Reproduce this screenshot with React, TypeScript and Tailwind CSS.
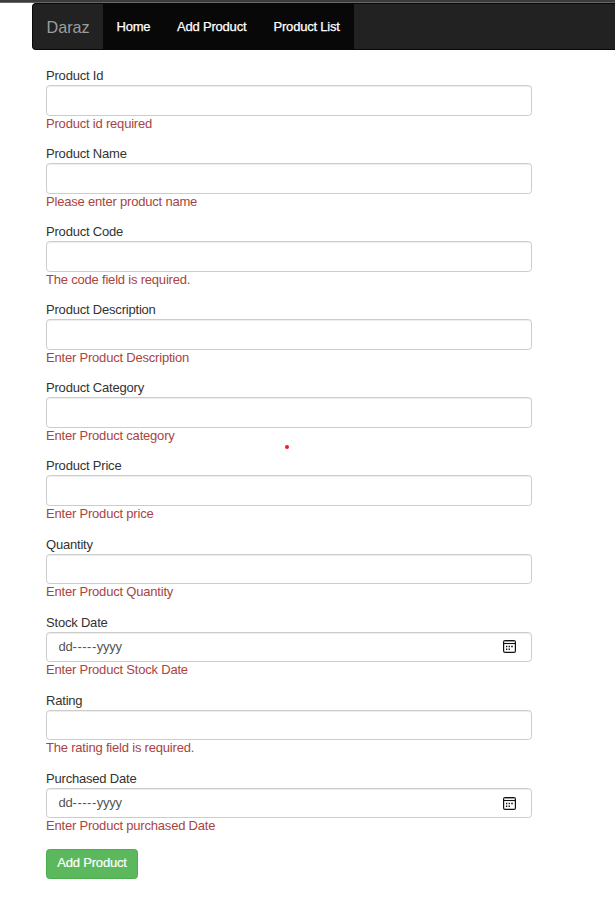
type FieldProps = { label: string; error: string; date?: boolean };

const fields: FieldProps[] = [
  { label: 'Product Id', error: 'Product id required' },
  { label: 'Product Name', error: 'Please enter product name' },
  { label: 'Product Code', error: 'The code field is required.' },
  { label: 'Product Description', error: 'Enter Product Description' },
  { label: 'Product Category', error: 'Enter Product category' },
  { label: 'Product Price', error: 'Enter Product price' },
  { label: 'Quantity', error: 'Enter Product Quantity' },
  { label: 'Stock Date', error: 'Enter Product Stock Date', date: true },
  { label: 'Rating', error: 'The rating field is required.' },
  { label: 'Purchased Date', error: 'Enter Product purchased Date', date: true },
];

function CalendarIcon() {
  return (
    <svg width="13" height="13" viewBox="0 0 13 13" fill="none" stroke="#111">
      <rect x=".6" y=".6" width="11.8" height="11.8" rx="1.5" strokeWidth="1.2" />
      <path d="M1 1.5h11" stroke="#999" strokeWidth=".8" />
      <path d="M1 3.5h11" strokeWidth="1.1" />
      <path d="M3 6.5h1.3M5.6 6.5h1.3M8.2 6.5h1.6M3 9.3h1.3M5.6 9.3h1.3" strokeWidth="1.5" />
    </svg>
  );
}

function Field({ label, error, date }: FieldProps) {
  return (
    <div className="h-[78.1px]">
      <label className="block h-[18px] text-[#333]">{label}</label>
      <div className="flex h-[30.6px] w-[486px] items-center justify-between rounded-[3.6px] border border-[#ccc] bg-white pr-[15px] pl-[11.5px] text-[#555] shadow-[inset_0_1px_1px_rgba(0,0,0,0.075)]">
        {date && (
          <>
            <span>dd<span className="tracking-[0.5px]">-----</span>yyyy</span>
            <CalendarIcon />
          </>
        )}
      </div>
      <div className="-mt-px h-[18px] text-[#a94442]">{error}</div>
    </div>
  );
}

export default function App() {
  return (
    <div className="relative h-[912px] w-full overflow-hidden bg-white font-['Liberation_Sans',Arial,sans-serif] text-[13px] leading-[18px] tracking-[-0.2px]">
      <div className="h-[3px] border-b border-[#676767] bg-[#3c3c3c]" />
      <nav className="ml-8 flex h-[47px] rounded-l-[4px] border border-r-0 border-[#080808] bg-[#222]">
        <a className="flex w-[70px] items-center pl-[13.5px] text-[16.2px] tracking-normal text-[#9d9d9d]">Daraz</a>
        <div className="flex h-full w-[251px] items-center bg-[#080808] pt-px pl-[13.5px] text-white [-webkit-text-stroke:0.25px_white]">
          <a className="w-[60.5px]">Home</a>
          <a className="w-[96.5px]">Add Product</a>
          <a>Product List</a>
        </div>
      </nav>
      <form className="ml-[46px] pt-[16.95px]">
        {fields.map((f) => <Field key={f.label} {...f} />)}
        <button type="button" className="mt-[1.5px] flex h-[30px] w-[92px] items-center justify-center rounded-[3.6px] border border-[#4cae4c] bg-[#5cb85c] pb-[2px] text-white [-webkit-text-stroke:0.2px_white]">
          Add Product
        </button>
      </form>
      <span className="absolute top-[445px] left-[285px] size-[4px] rounded-full bg-[#ed1c24]" />
    </div>
  );
}
